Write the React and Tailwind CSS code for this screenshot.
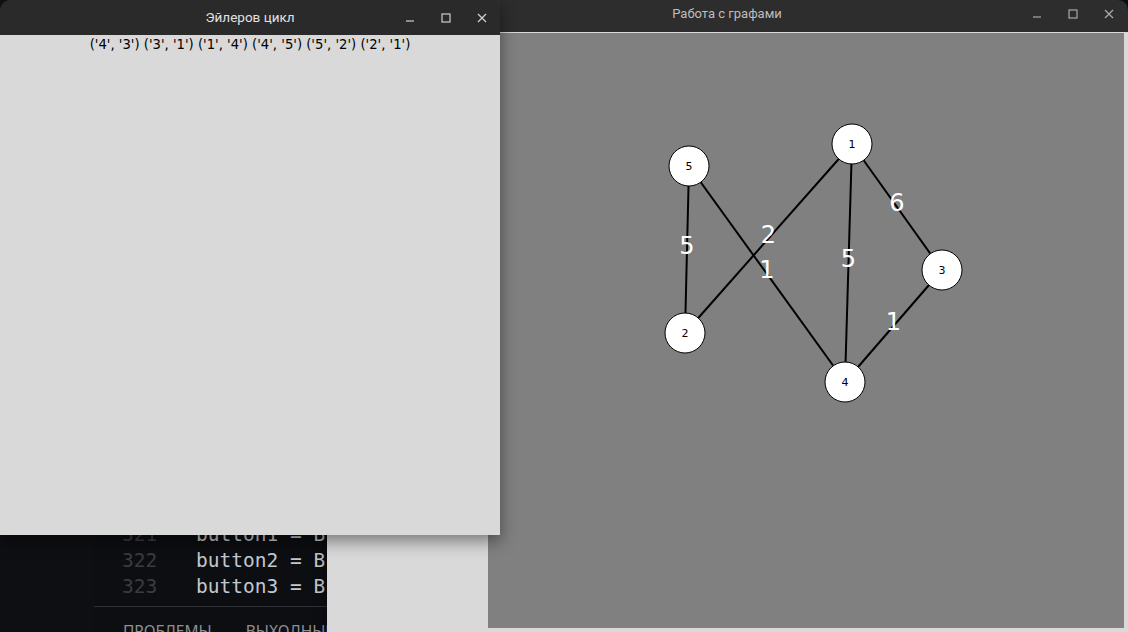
const nodes = {
  1: { x: 364, y: 111 },
  2: { x: 197, y: 300 },
  3: { x: 454, y: 237 },
  4: { x: 357, y: 349 },
  5: { x: 201, y: 133 },
};

const edges = [
  { a: 5, b: 2, w: 5 },
  { a: 1, b: 2, w: 2 },
  { a: 5, b: 4, w: 1 },
  { a: 1, b: 4, w: 5 },
  { a: 1, b: 3, w: 6 },
  { a: 3, b: 4, w: 1 },
];

const cycle = "('4', '3') ('3', '1') ('1', '4') ('4', '5') ('5', '2') ('2', '1')";

function WindowControls({ color }) {
  return (
    <div className="flex justify-end">
      <div className="w-9 h-full flex items-center justify-center">
        <svg width="10" height="10" viewBox="0 0 10 10">
          <line x1="1" y1="8" x2="9" y2="8" stroke={color} strokeWidth="1.2" />
        </svg>
      </div>
      <div className="w-9 h-full flex items-center justify-center">
        <svg width="10" height="10" viewBox="0 0 10 10">
          <rect x="1" y="1" width="8" height="8" fill="none" stroke={color} strokeWidth="1.2" />
        </svg>
      </div>
      <div className="w-9 h-full flex items-center justify-center">
        <svg width="10" height="10" viewBox="0 0 10 10">
          <path d="M1 1 L9 9 M9 1 L1 9" stroke={color} strokeWidth="1.3" />
        </svg>
      </div>
    </div>
  );
}

function GraphCanvas() {
  return (
    <svg width="636" height="595" className="block">
      {edges.map((e, i) => {
        const a = nodes[e.a];
        const b = nodes[e.b];
        return (
          <line key={i} x1={a.x} y1={a.y} x2={b.x} y2={b.y} stroke="#000" strokeWidth="2" />
        );
      })}
      {edges.map((e, i) => {
        const a = nodes[e.a];
        const b = nodes[e.b];
        return (
          <text
            key={i}
            x={(a.x + b.x) / 2}
            y={(a.y + b.y) / 2 + 4}
            textAnchor="middle"
            fill="#fff"
            fontSize="24"
            fontFamily="'DejaVu Sans', sans-serif"
          >
            {e.w}
          </text>
        );
      })}
      {Object.entries(nodes).map(([id, n]) => (
        <g key={id}>
          <circle cx={n.x} cy={n.y} r="20" fill="#fff" stroke="#000" strokeWidth="1" />
          <text
            x={n.x}
            y={n.y + 4}
            textAnchor="middle"
            fill="#000"
            fontSize="11"
            fontFamily="'DejaVu Sans', sans-serif"
          >
            {id}
          </text>
        </g>
      ))}
    </svg>
  );
}

export default function App() {
  return (
    <div className="relative w-[1128px] h-[632px] overflow-hidden bg-[#0e0f12]">
      {/* editor in the background */}
      <div className="flex h-full">
        <div className="w-[94px] bg-[#0e0f12]" />
        <div className="flex-1 flex flex-col bg-[#0d0e11]">
          <div className="flex-1 flex flex-col justify-end pb-[6px] font-['DejaVu_Sans_Mono',monospace] text-[19.5px] leading-[26px]">
            {[
              ["321", "button1 = B"],
              ["322", "button2 = B"],
              ["323", "button3 = B"],
            ].map(([n, code]) => (
              <div key={n} className="flex whitespace-pre">
                <span className="pl-[28px] w-[102px] text-[#393c41]">{n}</span>
                <span className="text-[#c4c7cc]">{code}</span>
              </div>
            ))}
          </div>
          <div className="h-[26px] border-t border-[#2e3035] flex gap-[34px] pl-[29px] pt-[14px] font-['Noto_Sans',sans-serif] text-[15.5px] leading-[20px] text-[#8b8f96] whitespace-nowrap">
            <span>ПРОБЛЕМЫ</span>
            <span>ВЫХОДНЫЕ ДАННЫЕ</span>
          </div>
        </div>
      </div>

      {/* graph window */}
      <div className="absolute left-[327px] top-0 w-[801px] h-[632px] flex flex-col shadow-[0_0_10px_rgba(0,0,0,0.5)]">
        <div className="h-[32px] rounded-t-[10px] bg-[#2d2d2d] grid grid-cols-[1fr_auto_1fr] items-center pr-[1px] pb-[4px]">
          <div />
          <div className="font-['Roboto',sans-serif] text-[13px] text-[#bdbdbd]">Работа с графами</div>
          <WindowControls color="#a9a9a9" />
        </div>
        <div className="flex-1 bg-[#d9d9d9] flex justify-end pt-[1px] pr-[4px] pb-[4px]">
          <div className="w-[636px] h-[595px] bg-[#808080]">
            <GraphCanvas />
          </div>
        </div>
      </div>

      {/* euler cycle window */}
      <div className="absolute left-0 top-0 w-[500px] h-[535px] flex flex-col shadow-[0_6px_16px_rgba(0,0,0,0.45)]">
        <div className="h-[35px] rounded-t-[10px] bg-[#2a2a2a] grid grid-cols-[1fr_auto_1fr] items-center">
          <div />
          <div className="font-['Roboto',sans-serif] text-[13.5px] text-[#e2e2e2]">Эйлеров цикл</div>
          <WindowControls color="#cfcfcf" />
        </div>
        <div className="flex-1 bg-[#d9d9d9] flex flex-col items-center">
          <div className="font-['DejaVu_Sans',sans-serif] text-[13.2px] leading-[20px] text-black whitespace-pre">
            {cycle}
          </div>
        </div>
      </div>
    </div>
  );
}
